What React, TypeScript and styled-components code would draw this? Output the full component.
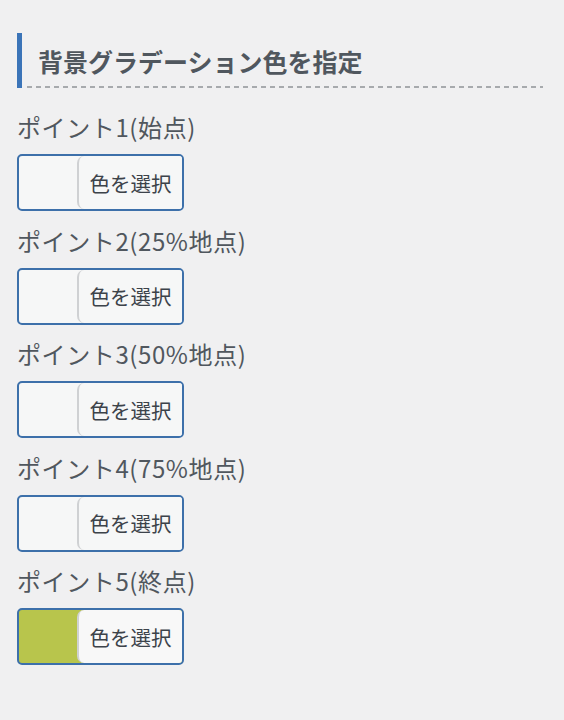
import React from 'react';
import styled, { createGlobalStyle } from 'styled-components';

const GlobalStyle = createGlobalStyle`
  html, body {
    margin: 0;
    padding: 0;
    background: #f0f0f1;
  }
  body {
    font-family: "Noto Sans CJK JP", "Noto Sans", sans-serif;
    color: #50575e;
  }
`;

const Panel = styled.div`
  padding: 33px 21px 40px 17px;
`;

const Heading = styled.h3`
  margin: 0 0 24px;
  height: 55px;
  box-sizing: border-box;
  display: flex;
  align-items: center;
  padding-left: 16px;
  border-left: 5px solid #3b74b8;
  font-size: 25px;
  font-weight: 700;
  color: #50575e;
  background-image: repeating-linear-gradient(to right, #a7aaad 0 5px, transparent 5px 9px);
  background-size: calc(100% - 5px) 2px;
  background-position: 5px 100%;
  background-repeat: no-repeat;
`;

const Field = styled.div`
  display: flex;
  flex-direction: column;
  align-items: flex-start;
  margin-bottom: 14.5px;
`;

const Label = styled.div`
  font-size: 24px;
  line-height: 30px;
  letter-spacing: 0.6px;
  margin-bottom: 12px;
  color: #50575e;
`;

const PickerButton = styled.button<{ $color?: string }>`
  display: flex;
  align-items: stretch;
  width: 167px;
  height: 57px;
  padding: 0;
  border: 2px solid #3d70aa;
  border-radius: 5px;
  background: ${p => p.$color ?? '#f6f7f7'};
  overflow: hidden;
  cursor: pointer;
  font-family: inherit;
`;

const Swatch = styled.span`
  width: 58px;
  flex-shrink: 0;
`;

const PickText = styled.span<{ $filled?: boolean }>`
  flex: 1;
  display: flex;
  align-items: center;
  justify-content: center;
  background: ${p => (p.$filled ? '#f8f8f8' : '#f6f7f7')};
  border-left: 2px solid #cfd1d3;
  border-radius: 7px 0 0 7px;
  font-size: 20.5px;
  color: #3c434a;
`;

const points: { label: string; color?: string }[] = [
  { label: 'ポイント1(始点)' },
  { label: 'ポイント2(25%地点)' },
  { label: 'ポイント3(50%地点)' },
  { label: 'ポイント4(75%地点)' },
  { label: 'ポイント5(終点)', color: '#b8c54c' },
];

const App: React.FC = () => {
  return (
    <>
      <GlobalStyle />
      <Panel>
        <Heading>背景グラデーション色を指定</Heading>
        {points.map(p => (
          <Field key={p.label}>
            <Label>{p.label}</Label>
            <PickerButton type="button" $color={p.color}>
              <Swatch />
              <PickText $filled={!!p.color}>色を選択</PickText>
            </PickerButton>
          </Field>
        ))}
      </Panel>
    </>
  );
};

export default App;
